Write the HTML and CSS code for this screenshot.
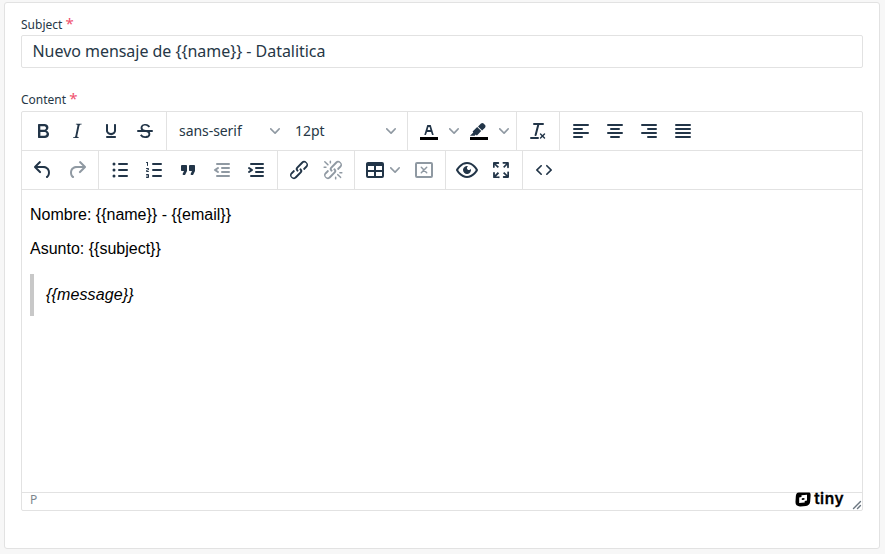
FILE: index.html
```
<!DOCTYPE html>
<html lang="es">
<head>
<meta charset="utf-8">
<title>Mensaje</title>
<link rel="stylesheet" href="styles.css">
</head>
<body>
<main class="card">
  <label class="label">Subject <span class="req">*</span></label>
  <div class="input">Nuevo mensaje de {{name}} - Datalitica</div>
  <label class="label label-content">Content <span class="req">*</span></label>
  <section class="editor">
    <div class="row">
      <div class="group">
        <button class="btn"><svg class="ic" viewBox="0 0 24 24"><path d="M7.8 19c-.3 0-.5 0-.6-.2l-.2-.5V5.7c0-.2 0-.4.2-.5l.6-.2h5c1.5 0 2.7.3 3.5 1 .7.6 1.1 1.4 1.1 2.5a3 3 0 0 1-.6 1.9c-.4.6-1 1-1.6 1.2.4.1.9.3 1.3.6s.8.7 1 1.2c.4.4.5 1 .5 1.6 0 1.3-.4 2.3-1.3 3-.8.7-2.1 1-3.8 1H7.8zm5-8.3c.6 0 1.2-.1 1.6-.5.4-.3.6-.7.6-1.3 0-1.1-.8-1.7-2.3-1.7H9.3v3.5h3.4zm.5 6c.7 0 1.3-.1 1.7-.4.4-.4.6-.9.6-1.5s-.2-1-.7-1.4c-.4-.3-1-.4-2-.4H9.4v3.8h4z" fill-rule="evenodd"/></svg></button>
        <button class="btn"><svg class="ic" viewBox="0 0 24 24"><path d="m16.7 4.7-.1.9h-.3c-.6 0-1 0-1.4.3-.3.3-.4.6-.5 1.1l-2.1 9.8v.6c0 .5.4.8 1.4.8h.2l-.2.8H8l.2-.8h.2c1.1 0 1.8-.5 2-1.5l2-9.8.1-.5c0-.6-.4-.8-1.4-.8h-.3l.2-.9h5.8z"/></svg></button>
        <button class="btn"><svg class="ic" viewBox="0 0 24 24"><path d="M16 5c.6 0 1 .4 1 1v5.5a4 4 0 0 1-.4 1.8l-1 1.4a5.3 5.3 0 0 1-5.5 1 5 5 0 0 1-1.6-1c-.5-.4-.8-.9-1.1-1.4a4 4 0 0 1-.4-1.8V6c0-.6.4-1 1-1s1 .4 1 1v5.5c0 .3 0 .6.2 1l.6.7a3.3 3.3 0 0 0 2.2.8 3.4 3.4 0 0 0 2.2-.8c.3-.2.4-.5.6-.8l.2-.9V6c0-.6.4-1 1-1zM8 17h8c.6 0 1 .4 1 1s-.4 1-1 1H8a1 1 0 0 1 0-2z"/></svg></button>
        <button class="btn"><svg class="ic" viewBox="0 0 24 24"><path d="M15.6 8.5c-.5-.7-1-1.1-1.3-1.3-.6-.4-1.3-.6-2-.6-2.7 0-2.8 1.7-2.8 2.1 0 1.6 1.8 2 3.2 2.3 4.4.9 4.6 2.8 4.6 3.9 0 1.4-.7 4.1-5 4.1A6.2 6.2 0 0 1 7 16.4l1.5-1.1c.4.6 1.6 2 3.7 2 1.6 0 2.5-.4 3-1.2.4-.8.3-2-.8-2.6-.7-.4-1.6-.7-2.9-1-1-.2-3.9-.8-3.9-3.6C7.6 6 10.3 5 12.4 5c2.9 0 4.2 1.6 4.7 2.4l-1.5 1.1z"/><path d="M5 11h14a1 1 0 0 1 0 2H5a1 1 0 0 1 0-2z"/></svg></button>
      </div>
      <div class="group">
        <button class="select"><span class="value">sans-serif</span><svg class="chev" viewBox="0 0 10 10"><path d="M8.7 2.2c.3-.3.8-.3 1 0 .4.4.4.9 0 1.2L5.7 7.8c-.3.3-.9.3-1.2 0L.2 3.4a.8.8 0 0 1 0-1.2c.3-.3.8-.3 1.1 0L5 6l3.7-3.8Z"/></svg></button>
        <button class="select"><span class="value">12pt</span><svg class="chev" viewBox="0 0 10 10"><path d="M8.7 2.2c.3-.3.8-.3 1 0 .4.4.4.9 0 1.2L5.7 7.8c-.3.3-.9.3-1.2 0L.2 3.4a.8.8 0 0 1 0-1.2c.3-.3.8-.3 1.1 0L5 6l3.7-3.8Z"/></svg></button>
      </div>
      <div class="group">
        <button class="split"><svg class="ic" viewBox="0 0 24 24"><path class="bar" d="M3 18h18v3H3z"/><path fill-rule="evenodd" d="M8.7 16h-.8a.5.5 0 0 1-.5-.6l2.7-9c.1-.3.3-.4.5-.4h2.8c.2 0 .4.1.5.4l2.7 9a.5.5 0 0 1-.5.6h-.8a.5.5 0 0 1-.4-.4l-.7-2.2c0-.3-.3-.4-.5-.4h-3.4c-.2 0-.4.1-.5.4l-.7 2.2c0 .3-.2.4-.4.4zm2.6-7.6-.6 2a.5.5 0 0 0 .5.6h1.6a.5.5 0 0 0 .5-.6l-.6-2c0-.3-.3-.4-.5-.4h-.4c-.2 0-.4.1-.5.4z"/></svg><svg class="chev" viewBox="0 0 10 10"><path d="M8.7 2.2c.3-.3.8-.3 1 0 .4.4.4.9 0 1.2L5.7 7.8c-.3.3-.9.3-1.2 0L.2 3.4a.8.8 0 0 1 0-1.2c.3-.3.8-.3 1.1 0L5 6l3.7-3.8Z"/></svg></button>
        <button class="split"><svg class="ic" viewBox="0 0 24 24"><path class="bar" d="M3 18h18v3H3z"/><path d="M7.7 16.7H3l3.3-3.3-.7-.8L10.2 8l4 4.1-4 4.2c-.2.2-.6.2-.8 0l-.6-.7-1.1 1.1zm5-7.5L11 7.4l3-2.9a2 2 0 0 1 2.6 0L18 6c.7.7.7 2 0 2.7l-2.9 2.9-1.8-1.8-.5-.6"/></svg><svg class="chev" viewBox="0 0 10 10"><path d="M8.7 2.2c.3-.3.8-.3 1 0 .4.4.4.9 0 1.2L5.7 7.8c-.3.3-.9.3-1.2 0L.2 3.4a.8.8 0 0 1 0-1.2c.3-.3.8-.3 1.1 0L5 6l3.7-3.8Z"/></svg></button>
      </div>
      <div class="group">
        <button class="btn"><svg class="ic" viewBox="0 0 24 24"><path d="M13.2 6a1 1 0 0 1 0 .2l-2.6 10a1 1 0 0 1-1 .8h-.2a.8.8 0 0 1-.8-1l2.6-10H8a1 1 0 1 1 0-2h9a1 1 0 0 1 0 2h-3.8zM5 18h7a1 1 0 0 1 0 2H5a1 1 0 0 1 0-2zm13 1.5L16.5 18 15 19.5a.7.7 0 0 1-1-1l1.5-1.5-1.5-1.5a.7.7 0 0 1 1-1l1.5 1.5 1.5-1.5a.7.7 0 0 1 1 1L17.5 17l1.5 1.5a.7.7 0 0 1-1 1z"/></svg></button>
      </div>
      <div class="group last">
        <button class="btn"><svg class="ic lines" viewBox="0 0 24 24"><path d="M5 6h14M5 10h8M5 14h14M5 18h8"/></svg></button>
        <button class="btn"><svg class="ic lines" viewBox="0 0 24 24"><path d="M5 6h14M8 10h8M5 14h14M8 18h8"/></svg></button>
        <button class="btn"><svg class="ic lines" viewBox="0 0 24 24"><path d="M5 6h14M11 10h8M5 14h14M11 18h8"/></svg></button>
        <button class="btn"><svg class="ic lines" viewBox="0 0 24 24"><path d="M5 6h14M5 10h14M5 14h14M5 18h14"/></svg></button>
      </div>
    </div>
    <div class="row">
      <div class="group">
        <button class="btn"><svg class="ic" viewBox="0 0 24 24"><path d="M6.4 8H12c3.7 0 6.2 2 6.8 5.1.6 2.7-.4 5.6-2.3 6.8a1 1 0 0 1-1-1.8c1.1-.6 1.8-2.7 1.4-4.6-.5-2.1-2.1-3.5-4.9-3.5H6.4l3.3 3.3a1 1 0 1 1-1.4 1.4l-5-5a1 1 0 0 1 0-1.4l5-5a1 1 0 0 1 1.4 1.4L6.4 8z"/></svg></button>
        <button class="btn off"><svg class="ic" viewBox="0 0 24 24"><path transform="matrix(-1 0 0 1 24 0)" d="M6.4 8H12c3.7 0 6.2 2 6.8 5.1.6 2.7-.4 5.6-2.3 6.8a1 1 0 0 1-1-1.8c1.1-.6 1.8-2.7 1.4-4.6-.5-2.1-2.1-3.5-4.9-3.5H6.4l3.3 3.3a1 1 0 1 1-1.4 1.4l-5-5a1 1 0 0 1 0-1.4l5-5a1 1 0 0 1 1.4 1.4L6.4 8z"/></svg></button>
      </div>
      <div class="group">
        <button class="btn"><svg class="ic lines" viewBox="0 0 24 24"><path d="M11 6h8M11 12h8M11 18h8"/><g class="dots"><circle cx="6" cy="6" r="1.5"/><circle cx="6" cy="12" r="1.5"/><circle cx="6" cy="18" r="1.5"/></g></svg></button>
        <button class="btn"><svg class="ic lines" viewBox="0 0 24 24"><path d="M11 6h8M11 12h8M11 18h8"/><path class="dots" d="M6 4v3.5c0 .3-.2.5-.5.5a.5.5 0 0 1-.5-.5V5h-.5a.5.5 0 0 1 0-1H6zm-1 8.8.2.2h1.3c.3 0 .5.2.5.5s-.2.5-.5.5H4.9a1 1 0 0 1-.9-1V13c0-.4.3-.8.6-1l1.2-.4.2-.3a.2.2 0 0 0-.2-.2H4.5a.5.5 0 0 1-.5-.5c0-.3.2-.5.5-.5h1.6c.5 0 .9.4.9 1v.1c0 .4-.3.8-.6 1l-1.2.4-.2.3zM7 17v2c0 .6-.4 1-1 1H4.5a.5.5 0 0 1 0-1h1.2c.2 0 .3-.1.3-.3 0-.2-.1-.3-.3-.3H4.4a.4.4 0 1 1 0-.8h1.3c.2 0 .3-.1.3-.3 0-.2-.1-.3-.3-.3H4.5a.5.5 0 1 1 0-1H6c.6 0 1 .4 1 1z"/></svg></button>
        <button class="btn"><svg class="ic" viewBox="0 0 24 24"><path d="M7.5 17h.9c.4 0 .7-.2.9-.6L11 13V8c0-.6-.4-1-1-1H6a1 1 0 0 0-1 1v4c0 .6.4 1 1 1h2l-1.3 2.7a1 1 0 0 0 .8 1.3zm8 0h.9c.4 0 .7-.2.9-.6L19 13V8c0-.6-.4-1-1-1h-4a1 1 0 0 0-1 1v4c0 .6.4 1 1 1h2l-1.3 2.7a1 1 0 0 0 .8 1.3z"/></svg></button>
        <button class="btn off"><svg class="ic lines" viewBox="0 0 24 24"><path d="M7 6h12M12 10h7M12 14h7M7 18h12"/><path class="dots" d="M8.6 13.2a1 1 0 0 1-1.2 1.6l-3-2a1 1 0 0 1 0-1.6l3-2a1 1 0 0 1 1.2 1.6L6.8 12l1.8 1.2z"/></svg></button>
        <button class="btn"><svg class="ic lines" viewBox="0 0 24 24"><path d="M7 6h12M12 10h7M12 14h7M7 18h12"/><path class="dots" d="M4.4 13.2 6.2 12l-1.8-1.2a1 1 0 0 1 1.2-1.6l3 2a1 1 0 0 1 0 1.6l-3 2a1 1 0 1 1-1.2-1.6z"/></svg></button>
      </div>
      <div class="group">
        <button class="btn"><svg class="ic" viewBox="0 0 24 24"><path d="M6.2 12.3a1 1 0 0 1 1.4 1.4l-2 2a2 2 0 1 0 2.6 2.8l4.8-4.8a1 1 0 0 0 0-1.4 1 1 0 1 1 1.4-1.3 2.9 2.9 0 0 1 0 4L9.6 20a3.9 3.9 0 0 1-5.5-5.5l2-2zm11.6-.6a1 1 0 0 1-1.4-1.4l2-2a2 2 0 1 0-2.6-2.8L11 10.3a1 1 0 0 0 0 1.4A1 1 0 1 1 9.6 13a2.9 2.9 0 0 1 0-4L14.4 4a3.9 3.9 0 0 1 5.5 5.5l-2 2z"/></svg></button>
        <button class="btn off"><svg class="ic" viewBox="0 0 24 24"><path d="M6.2 12.3a1 1 0 0 1 1.4 1.4l-2 2a2 2 0 1 0 2.6 2.8l4.8-4.8a1 1 0 0 0 0-1.4 1 1 0 1 1 1.4-1.3 2.9 2.9 0 0 1 0 4L9.6 20a3.9 3.9 0 0 1-5.5-5.5l2-2zm11.6-.6a1 1 0 0 1-1.4-1.4l2-2a2 2 0 1 0-2.6-2.8L11 10.3a1 1 0 0 0 0 1.4A1 1 0 1 1 9.6 13a2.9 2.9 0 0 1 0-4L14.4 4a3.9 3.9 0 0 1 5.5 5.5l-2 2zM7.6 6.3a.8.8 0 0 1-1 1.1L3.3 4.2a.7.7 0 1 1 1-1l3.2 3.1zM5.1 8.6a.8.8 0 0 1 0 1.5H3a.8.8 0 0 1 0-1.5H5zm5-3.5a.8.8 0 0 1-1.5 0V3a.8.8 0 0 1 1.5 0V5zm6 11.8a.8.8 0 0 1 1-1l3.2 3.2a.8.8 0 0 1-1 1L16 17zm-2.2 2a.8.8 0 0 1 1.5 0V21a.8.8 0 0 1-1.5 0V19zm5-3.5a.7.7 0 1 1 0-1.5H21a.8.8 0 0 1 0 1.5H19z"/></svg></button>
      </div>
      <div class="group">
        <button class="split split-table"><svg class="ic" viewBox="0 0 24 24"><path fill-rule="evenodd" d="M19 4a2 2 0 0 1 2 2v12a2 2 0 0 1-2 2H5a2 2 0 0 1-2-2V6c0-1.1.9-2 2-2h14zM5 14v4h6v-4H5zm14 0h-6v4h6v-4zm0-6h-6v4h6V8zM5 12h6V8H5v4z"/></svg><svg class="chev" viewBox="0 0 10 10"><path d="M8.7 2.2c.3-.3.8-.3 1 0 .4.4.4.9 0 1.2L5.7 7.8c-.3.3-.9.3-1.2 0L.2 3.4a.8.8 0 0 1 0-1.2c.3-.3.8-.3 1.1 0L5 6l3.7-3.8Z"/></svg></button>
        <button class="btn off"><svg class="ic delete" viewBox="0 0 24 24"><rect x="4" y="5" width="16" height="14" rx="1"/><path d="m9.3 9.3 5.4 5.4m0-5.4-5.4 5.4"/></svg></button>
      </div>
      <div class="group">
        <button class="btn"><svg class="ic" viewBox="0 0 24 24"><path fill-rule="evenodd" d="M3.5 12.5c.5.8 1.1 1.6 1.8 2.3 2 2 4.2 3.2 6.7 3.2s4.7-1.2 6.7-3.2a16.2 16.2 0 0 0 2.1-2.8 15.7 15.7 0 0 0-2.1-2.8c-2-2-4.2-3.2-6.7-3.2a9.3 9.3 0 0 0-6.7 3.2A16.2 16.2 0 0 0 3.2 12c0 .2.2.3.3.5zm-2.4-1 .7-1.2L4 7.8C6.2 5.4 8.9 4 12 4c3 0 5.8 1.4 8.1 3.8a18.2 18.2 0 0 1 2.8 3.7v1l-.7 1.2a18.2 18.2 0 0 1-2.1 2.5c-2.3 2.4-5 3.8-8.1 3.8-3 0-5.8-1.4-8.1-3.8a18.2 18.2 0 0 1-2.8-3.7 1 1 0 0 1 0-1zm12-3.3a2 2 0 1 0 2.7 2.6 4 4 0 1 1-2.6-2.6z"/></svg></button>
        <button class="btn"><svg class="ic" viewBox="0 0 24 24"><path d="m15.3 10-1.2-1.3 2.9-3h-2.3a.9.9 0 1 1 0-1.7H19c.5 0 .9.4.9.9v4.4a.9.9 0 1 1-1.8 0V7l-2.9 3zm0 4 3 3v-2.3a.9.9 0 1 1 1.7 0V19c0 .5-.4.9-.9.9h-4.4a.9.9 0 1 1 0-1.8H17l-3-2.9 1.3-1.2zM10 15.4l-2.9 3h2.3a.9.9 0 1 1 0 1.7H5a.9.9 0 0 1-.9-.9v-4.4a.9.9 0 1 1 1.8 0V17l2.9-3 1.2 1.3zM8.7 10 5.7 7v2.3a.9.9 0 0 1-1.7 0V5c0-.5.4-.9.9-.9h4.4a.9.9 0 0 1 0 1.8H7l3 2.9-1.3 1.2z"/></svg></button>
      </div>
      <div class="group last">
        <button class="btn"><svg class="ic" viewBox="0 0 24 24"><path d="M9.8 15.7c.3.3.3.8 0 1-.3.4-.9.4-1.2 0l-4.4-4.1a.8.8 0 0 1 0-1.2l4.4-4.2c.3-.3.9-.3 1.2 0 .3.3.3.8 0 1.1L6 12l3.8 3.7zM14.2 15.7c-.3.3-.3.8 0 1 .4.4.9.4 1.2 0l4.4-4.1c.3-.3.3-.8 0-1.2l-4.4-4.2a.8.8 0 0 0-1.2 0c-.3.3-.3.8 0 1.1L18 12l-3.8 3.7z"/></svg></button>
      </div>
    </div>
    <div class="content">
      <p>Nombre: {{name}} - {{email}}</p>
      <p>Asunto: {{subject}}</p>
      <blockquote><em>{{message}}</em></blockquote>
    </div>
    <footer class="status">
      <span class="path">P</span>
      <span class="brand"><svg class="logo" viewBox="0 0 16 16"><path fill-rule="evenodd" d="M5 .8 11 .2C14 0 15.800 1.500 15.600 4.500L15.200 10.500c-.2 2.600-1.700 4.200-4.200 4.400L5.500 15.400C2.400 15.600.4 14 .4 11L.8 5.200C1 2.500 2.500 1 5 .8zM6.500 4.300v1.600L4.200 6.400v5.700l5.500-.5V9.900l2.300-.4V3.700zM6.800 7.200l2.600-.3v1.900l-2.600.3z"/></svg><span class="word">tiny</span></span>
      <svg class="resize" viewBox="0 0 10 10"><path d="M8 1.100A.5.5 0 1 1 9 2l-7 7A.5.5 0 1 1 1 8l7-7zM8 5.100A.5.5 0 1 1 9 6l-3 3A.5.5 0 1 1 5 8l3-3z"/></svg>
    </footer>
  </section>
</main>
</body>
</html>
```
FILE: styles.css
```
* { box-sizing: border-box; }
body {
  margin: 0;
  height: 554px;
  padding: 2px 5px 5px 4px;
  background: #f7f7f7;
  font-family: "Noto Sans", sans-serif;
  color: #263746;
  overflow: hidden;
}
.card {
  height: 547px;
  padding: 12px 16px 0;
  background: #fff;
  border: 1px solid #e2e2e2;
  border-radius: 3px;
}
.label { display: block; height: 20px; line-height: 20px; font-size: 12px; white-space: nowrap; }
.label-content { margin: 22px 0 1px; }
.req { color: #f0506e; font-size: 15px; line-height: 12px; }
.input {
  height: 33px;
  padding-left: 10.500px;
  border: 1px solid #e2e2e2;
  border-radius: 2px;
  font-size: 16px;
  letter-spacing: -.04px;
  line-height: 31px;
  white-space: nowrap;
}
.editor {
  height: 400px;
  border: 1px solid #e2e2e2;
  border-radius: 2px;
  display: flex;
  flex-direction: column;
}
.row { display: flex; height: 39px; border-bottom: 1px solid #e2e2e2; }
.group { display: flex; align-items: center; padding: 0 4px; border-right: 1px solid #e2e2e2; }
.group.last { border-right: 0; }
button { border: 0; margin: 0; padding: 0; background: none; font: inherit; color: inherit; display: flex; align-items: center; }
.btn { width: 34px; height: 34px; justify-content: center; }
.off { opacity: .5; }
.ic { width: 24px; height: 24px; fill: #223548; flex: none; }
.lines { stroke: #223548; stroke-width: 2; stroke-linecap: round; }
.lines .dots { stroke: none; }
.delete { fill: none; stroke: #223548; stroke-width: 2; stroke-linecap: round; }
.delete path { stroke-width: 1.500; }
.bar { fill: #000; }
.chev { width: 10px; height: 10px; fill: #223548; opacity: .5; flex: none; }
.select { width: 116px; height: 34px; justify-content: space-between; padding: 0 7px 0 8px; font-size: 14px; }
.value { padding-bottom: 2px; letter-spacing: -.06px; }
.split { width: 50px; height: 34px; padding-left: 5px; gap: 8px; }
.split-table { width: 48px; padding-left: 4px; gap: 3px; }
.content { flex: 1; padding: 14px 8px; font: 16px/22.400px "Liberation Sans", sans-serif; color: #000; }
.content p { margin: 0 0 12px; }
.content blockquote { margin: 13px 0 0; padding: 10px 12px; border-left: 4px solid #c8c8c8; height: 42px; }
.content em { letter-spacing: .12px; }
.status { height: 18px; flex: none; border-top: 1px solid #e2e2e2; display: flex; align-items: flex-start; padding: 0 0 0 8px; }
.path { flex: 1; font-size: 12px; line-height: 14px; color: #7b858e; }
.brand { display: flex; align-items: flex-start; color: #000; margin-right: 7px; }
.logo { width: 16px; height: 16px; margin-top: -2px; clip-path: inset(1.500px 0 0); }
.word { font: 600 15.500px/17px Inter, sans-serif; letter-spacing: .5px; -webkit-text-stroke: .3px #000; margin: -3px 1px 0 3px; }
.resize { width: 10px; height: 10px; align-self: flex-end; fill: #6b7680; }
```
